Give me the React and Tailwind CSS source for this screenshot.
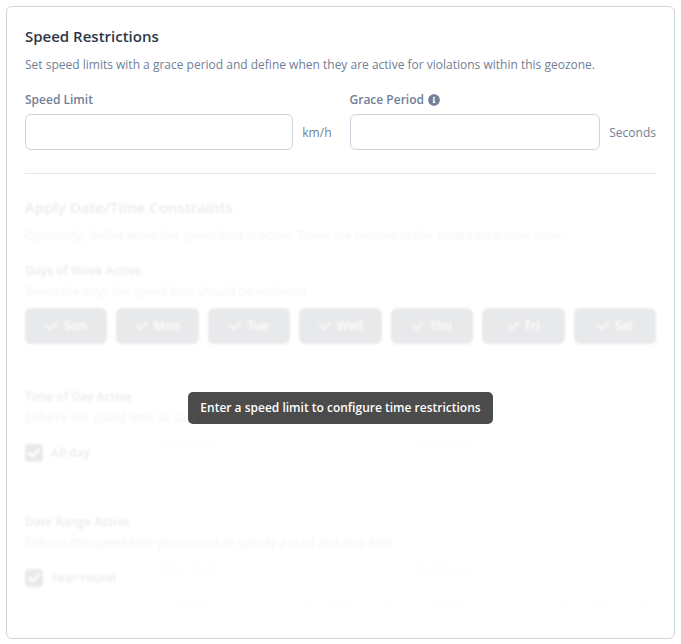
import { useState } from 'react'
import { FaCheck, FaInfoCircle } from 'react-icons/fa'
import { ChevronDown } from 'lucide-react'

const days = ['Sun', 'Mon', 'Tue', 'Wed', 'Thu', 'Fri', 'Sat']
const months = ['Jan', 'Feb', 'Mar', 'Apr', 'May', 'Jun', 'Jul', 'Aug', 'Sep', 'Oct', 'Nov', 'Dec']

function NumberField({ id, label, unit, info, value, onChange }) {
  return (
    <div>
      <label htmlFor={id} className="flex items-center gap-1 font-semibold leading-5">
        {label}
        {info && <FaInfoCircle className="size-3" />}
      </label>
      <div className="mt-1 flex items-center gap-[9px]">
        <input id={id} type="text" inputMode="numeric" value={value} onChange={e => onChange(e.target.value)} className="h-9 min-w-0 flex-1 rounded-md border border-[#cbd5e0] px-3 text-[#2d3748] outline-none" />
        <span className="pt-0.5">{unit}</span>
      </div>
    </div>
  )
}

function Check({ id, label }) {
  return (
    <label htmlFor={id} className="flex items-center gap-2 font-semibold text-[#2d3748]">
      <span className="grid size-[18px]">
        <input id={id} type="checkbox" defaultChecked className="peer col-start-1 row-start-1 size-[18px] appearance-none rounded-sm border border-[#2d3748] checked:bg-[#2d3748]" />
        <FaCheck className="pointer-events-none invisible col-start-1 row-start-1 size-3 place-self-center text-white peer-checked:visible" />
      </span>
      {label}
    </label>
  )
}

function Select({ label, options, className }) {
  return (
    <div className={`grid items-center ${className}`}>
      <select disabled aria-label={label} className="col-start-1 row-start-1 h-9 w-full appearance-none rounded-md border border-[#cbd5e0] px-3">
        <option>{label}</option>
        {options.map(o => <option key={o}>{o}</option>)}
      </select>
      <ChevronDown className="pointer-events-none col-start-1 row-start-1 mr-1 size-4 justify-self-end" strokeWidth={3} />
    </div>
  )
}

function TimeField({ id, label }) {
  return (
    <div>
      <label htmlFor={id} className="block leading-5">{label}</label>
      <input id={id} disabled placeholder="--:-- --" className="mt-1 h-9 w-full rounded-md border border-[#cbd5e0] px-3" />
    </div>
  )
}

function DateField({ label }) {
  return (
    <fieldset>
      <legend className="mb-1.5 leading-5">{label}</legend>
      <div className="flex">
        <Select label="Month" options={months} className="min-w-0 flex-1" />
        <Select label="Day" options={Array.from({ length: 31 }, (_, i) => i + 1)} className="w-20" />
      </div>
    </fieldset>
  )
}

function App() {
  const [speed, setSpeed] = useState('')
  const [grace, setGrace] = useState('')
  const [active, setActive] = useState(days)
  const locked = !speed

  function toggleDay(day) {
    setActive(active.includes(day) ? active.filter(d => d !== day) : [...active, day])
  }

  return (
    <div className="p-1.5 font-['Open_Sans','Noto_Sans',sans-serif] text-[12px] text-[#718096]">
      <main className="rounded-md border border-[#cbd5e0] bg-white px-[18px] pt-[17px]">
        <h1 className="text-[15px] leading-6 font-semibold text-[#2d3748]">Speed Restrictions</h1>
        <p className="mt-[7px] leading-5">Set speed limits with a grace period and define when they are active for violations within this geozone.</p>
        <div className="mt-[15px] grid grid-cols-2 gap-[18px]">
          <NumberField id="speed" label="Speed Limit" unit="km/h" value={speed} onChange={setSpeed} />
          <NumberField id="grace" label="Grace Period" unit="Seconds" info value={grace} onChange={setGrace} />
        </div>
        <hr className="mt-[23px] border-[#e2e8f0]" />

        <div className="relative mt-1">
          <div inert={locked} className={locked ? 'pt-[17px] pb-[17px] opacity-10 blur-[1px]' : 'pt-[17px] pb-[17px]'}>
            <h2 className="text-[15px] leading-6 font-semibold text-[#2d3748]">Apply Date/Time Constraints</h2>
            <p className="mt-[7px] leading-5">Optionally, define when the speed limit is active. Times are relative to the asset's local time zone.</p>

            <h3 className="mt-[15px] leading-5 font-semibold text-[#2d3748]">Days of Week Active</h3>
            <p className="leading-[22px]">Select the days the speed limit should be enforced.</p>
            <div className="mt-[5px] grid grid-cols-7 gap-[9px]">
              {days.map(day => (
                <button key={day} type="button" aria-pressed={active.includes(day)} onClick={() => toggleDay(day)} className="flex h-9 items-center justify-center gap-1.5 rounded-md bg-[#2d3748] font-semibold text-white">
                  {active.includes(day) && <FaCheck className="size-3 opacity-60" />}
                  {day}
                </button>
              ))}
            </div>

            <h3 className="mt-[43px] leading-5 font-semibold text-[#2d3748]">Time of Day Active</h3>
            <p className="leading-[22px]">Enforce the speed limit all day or specify a start and end time.</p>
            <div className="mt-[5px] grid grid-cols-[118px_1fr_1fr] items-start gap-[18px]">
              <div className="pt-2.5">
                <Check id="allday" label="All-day" />
              </div>
              <div className="opacity-30">
                <TimeField id="start-time" label="Start Time" />
              </div>
              <div className="opacity-30">
                <TimeField id="end-time" label="End Time" />
              </div>
            </div>

            <h3 className="mt-[18px] leading-5 font-semibold text-[#2d3748]">Date Range Active</h3>
            <p className="leading-[22px]">Enforce the speed limit year-round or specify a start and end date.</p>
            <div className="mt-[5px] grid grid-cols-[118px_1fr_1fr] items-start gap-[18px]">
              <div className="pt-2.5">
                <Check id="yearround" label="Year-round" />
              </div>
              <div className="opacity-30">
                <DateField label="Start Date" />
              </div>
              <div className="opacity-30">
                <DateField label="End Date" />
              </div>
            </div>
          </div>
          {locked && (
            <div className="absolute inset-0 flex items-center justify-center">
              <div role="status" className="rounded-[5px] bg-black/70 px-3 py-1.5 leading-5 font-semibold text-white">Enter a speed limit to configure time restrictions</div>
            </div>
          )}
        </div>
      </main>
    </div>
  )
}

export default App
